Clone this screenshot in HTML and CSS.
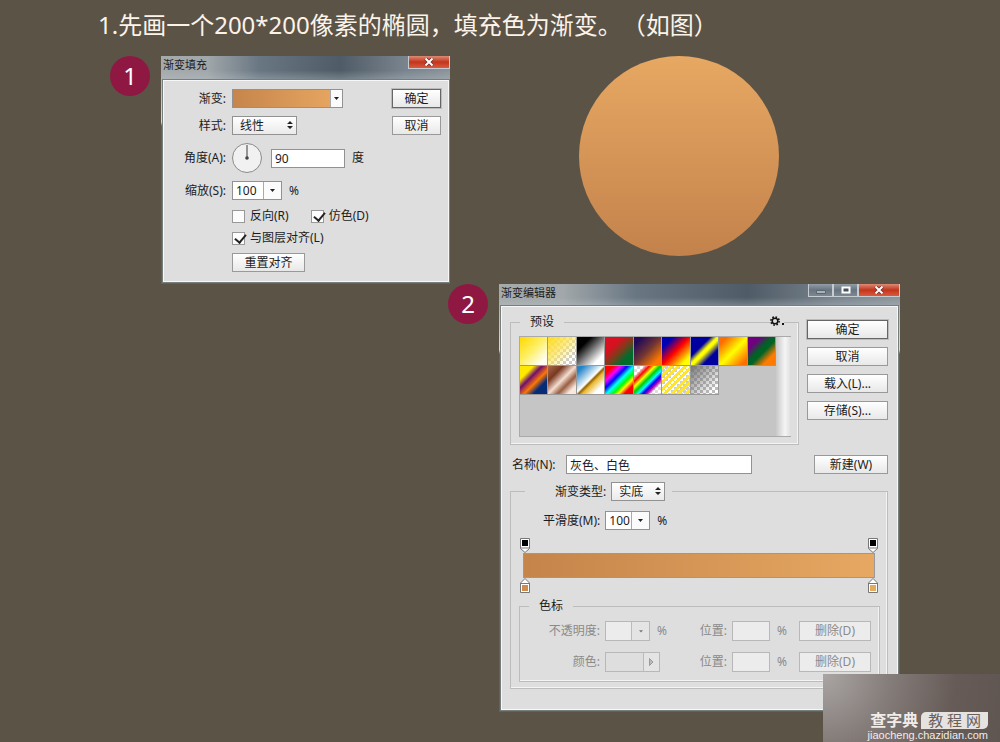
FILE: index.html
```html
<!DOCTYPE html>
<html lang="zh-CN">
<head>
<meta charset="utf-8">
<title>渐变填充教程</title>
<link rel="stylesheet" href="styles.css">
</head>
<body>
<h1 class="heading">1.先画一个200*200像素的椭圆，填充色为渐变。（如图）</h1>

<main>
  <section class="step step-one">
    <span class="badge">1</span>
    <form class="dialog fill-dialog">
      <header class="titlebar">
        <h2 class="title">渐变填充</h2>
        <div class="window-buttons">
          <button type="button" class="win-btn close" aria-label="关闭"><svg width="10" height="8" viewBox="0 0 10 8"><path d="M1.500 .5 8.500 7.500M8.500 .5 1.500 7.500" stroke="#7b3030" stroke-width="3.600"/><path d="M1.500 .5 8.500 7.500M8.500 .5 1.500 7.500" stroke="#fff" stroke-width="2"/></svg></button>
        </div>
      </header>
      <div class="dialog-body fill-body">
        <div class="fill-fields">
          <div class="field">
            <label for="grad">渐变:</label>
            <div class="combo grad-combo">
              <button type="button" id="grad" class="grad-preview" aria-label="渐变"></button>
              <button type="button" class="drop" aria-label="展开"><svg width="5" height="3" viewBox="0 0 5 3"><path d="M0 0H5L2.500 3Z"/></svg></button>
            </div>
          </div>
          <div class="field">
            <label for="style">样式:</label>
            <span class="select style-select"><select id="style"><option>线性</option></select><svg width="6" height="8" viewBox="0 0 6 8"><path d="M0 3H6L3 0ZM0 5H6L3 8Z"/></svg></span>
          </div>
          <div class="field">
            <label for="angle">角度(A):</label>
            <svg class="dial" width="32" height="30" viewBox="0 0 32 30"><circle cx="15" cy="15" r="14.500" fill="#f1f1f1" stroke="#8a8a8a"/><path d="M15 2V15" stroke="#777" stroke-width="1.500"/><circle cx="15" cy="15" r="1.800" fill="#444"/></svg>
            <input id="angle" class="text angle" type="text" value="90"><span class="unit">度</span>
          </div>
          <div class="field">
            <label for="scale">缩放(S):</label>
            <div class="combo scale-combo">
              <input id="scale" type="text" value="100">
              <button type="button" class="drop" aria-label="展开"><svg width="5" height="3" viewBox="0 0 5 3"><path d="M0 0H5L2.500 3Z"/></svg></button>
            </div><span class="unit">%</span>
          </div>
          <div class="checks">
            <div class="check-row">
              <label class="check"><input type="checkbox">反向(R)</label>
              <label class="check"><input type="checkbox" checked>仿色(D)</label>
            </div>
            <div class="check-row"><label class="check"><input type="checkbox" checked>与图层对齐(L)</label></div>
          </div>
          <button type="button" class="btn reset">重置对齐</button>
        </div>
        <div class="actions">
          <button type="button" class="btn default">确定</button>
          <button type="button" class="btn">取消</button>
        </div>
      </div>
    </form>
    <div class="ellipse"></div>
  </section>

  <section class="step step-two">
    <span class="badge">2</span>
    <form class="dialog editor-dialog">
      <header class="titlebar">
        <h2 class="title">渐变编辑器</h2>
        <div class="window-buttons">
          <button type="button" class="win-btn" aria-label="最小化"><svg width="12" height="8" viewBox="0 0 12 8"><path d="M1.500 4.500H10.500V7.500H1.500Z" fill="#a9b2ba" stroke="#5b6670"/></svg></button>
          <button type="button" class="win-btn" aria-label="最大化"><svg width="10" height="8" viewBox="0 0 10 8"><path d="M1.500 1.500H8.500V6.500H1.500Z" fill="#46515e" stroke="#fff" stroke-width="2"/></svg></button>
          <button type="button" class="win-btn close" aria-label="关闭"><svg width="10" height="8" viewBox="0 0 10 8"><path d="M1.500 .5 8.500 7.500M8.500 .5 1.500 7.500" stroke="#7b3030" stroke-width="3.600"/><path d="M1.500 .5 8.500 7.500M8.500 .5 1.500 7.500" stroke="#fff" stroke-width="2"/></svg></button>
        </div>
      </header>
      <div class="dialog-body editor-body">
        <div class="editor-top">
          <fieldset class="group presets">
            <legend>预设</legend>
            <button type="button" class="gear" aria-label="预设选项"><svg width="14" height="10" viewBox="0 0 14 10"><circle cx="5" cy="5" r="2.800" fill="none" stroke="#111" stroke-width="1.500"/><circle cx="5" cy="5" r="4.100" fill="none" stroke="#111" stroke-width="1.600" stroke-dasharray="1.610 1.610"/><path d="M12 7H14V9H12Z" fill="#111"/></svg></button>
            <div class="preset-list">
              <div class="swatches">
                <i class="swatch s1"></i><i class="swatch s2"></i><i class="swatch s3"></i><i class="swatch s4"></i><i class="swatch s5"></i><i class="swatch s6"></i><i class="swatch s7"></i><i class="swatch s8"></i><i class="swatch s9"></i>
                <i class="swatch s10"></i><i class="swatch s11"></i><i class="swatch s12"></i><i class="swatch s13"></i><i class="swatch s14"></i><i class="swatch s15"></i><i class="swatch s16"></i>
              </div>
              <div class="scrollbar"></div>
            </div>
          </fieldset>
          <div class="actions">
            <button type="button" class="btn default">确定</button>
            <button type="button" class="btn">取消</button>
            <button type="button" class="btn">载入(L)...</button>
            <button type="button" class="btn">存储(S)...</button>
          </div>
        </div>

        <div class="name-row">
          <label for="name">名称(N):</label>
          <input id="name" class="text name" type="text" value="灰色、白色">
          <button type="button" class="btn new">新建(W)</button>
        </div>

        <fieldset class="group type-group">
          <legend><label for="type">渐变类型:</label><span class="select"><select id="type"><option>实底</option></select><svg width="6" height="8" viewBox="0 0 6 8"><path d="M0 3H6L3 0ZM0 5H6L3 8Z"/></svg></span></legend>
          <div class="smooth-row">
            <label for="smooth">平滑度(M):</label>
            <div class="combo small-combo">
              <input id="smooth" type="text" value="100">
              <button type="button" class="drop" aria-label="展开"><svg width="5" height="3" viewBox="0 0 5 3"><path d="M0 0H5L2.500 3Z"/></svg></button>
            </div><span class="unit">%</span>
          </div>
          <div class="ramp">
            <div class="stops">
              <svg width="10" height="15" viewBox="0 0 10 15"><path d="M.5 .5H9.500V10.500L5 14.500 .5 10.500Z" fill="#fff" stroke="#777"/><path d="M.5 10H9.500" stroke="#777"/><path d="M2 2H8V8H2Z" fill="#000"/></svg>
              <svg width="10" height="15" viewBox="0 0 10 15"><path d="M.5 .5H9.500V10.500L5 14.500 .5 10.500Z" fill="#fff" stroke="#777"/><path d="M.5 10H9.500" stroke="#777"/><path d="M2 2H8V8H2Z" fill="#000"/></svg>
            </div>
            <div class="ramp-bar"></div>
            <div class="stops">
              <svg width="10" height="15" viewBox="0 0 10 15"><path d="M.5 14.500H9.500V5L5 .5 .5 5Z" fill="#fff" stroke="#777"/><path d="M.5 5.500H9.500" stroke="#777"/><path d="M2 7H8V13H2Z" fill="#cf8a4c"/></svg>
              <svg width="10" height="15" viewBox="0 0 10 15"><path d="M.5 14.500H9.500V5L5 .5 .5 5Z" fill="#fff" stroke="#777"/><path d="M.5 5.500H9.500" stroke="#777"/><path d="M2 7H8V13H2Z" fill="#e5aa5c"/></svg>
            </div>
          </div>
          <fieldset class="group stop-group" disabled>
            <legend>色标</legend>
            <div class="stop-row">
              <label for="opacity">不透明度:</label>
              <div class="stop-control"><div class="combo small-combo">
                <input id="opacity" type="text">
                <button type="button" class="drop" aria-label="展开"><svg width="4" height="3" viewBox="0 0 6 4"><path d="M0 0H6L3 3.500Z"/></svg></button>
              </div><span class="unit">%</span></div>
              <label for="pos1">位置:</label>
              <div class="stop-control"><input id="pos1" class="text pos" type="text"><span class="unit">%</span></div>
              <button type="button" class="btn">删除(D)</button>
            </div>
            <div class="stop-row">
              <label for="color">颜色:</label>
              <div class="stop-control"><div class="combo color-combo">
                <button type="button" id="color" class="color-well" aria-label="颜色"></button>
                <button type="button" class="drop" aria-label="展开"><svg width="5" height="8" viewBox="0 0 5 8"><path d="M.5 .5V7.500L4 4Z" fill="#bbb" stroke="#999"/></svg></button>
              </div></div>
              <label for="pos2">位置:</label>
              <div class="stop-control"><input id="pos2" class="text pos" type="text"><span class="unit">%</span></div>
              <button type="button" class="btn">删除(D)</button>
            </div>
          </fieldset>
        </fieldset>
      </div>
    </form>
  </section>
</main>

<aside class="watermark">
  <div class="brand"><span class="brand-name">查字典</span><span class="brand-tag">教 程 网</span></div>
  <div class="brand-url">jiaocheng.chazidian.com</div>
</aside>
</body>
</html>
```
FILE: styles.css
```css
* { box-sizing: border-box; }

body {
  margin: 0;
  min-height: 100vh;
  position: relative;
  overflow: hidden;
  background: #5c5347;
  color: #1c1c1c;
  font: 12px/16px "Noto Sans", "Noto Sans CJK SC", sans-serif;
}

button, input, select { font: inherit; color: inherit; margin: 0; padding: 0; border-radius: 0; }
svg { display: block; fill: #222; flex: none; }

.heading {
  margin: 0;
  padding: 8px 0 0 98px;
  height: 56px;
  color: #fbf3ea;
  font-size: 24px;
  font-weight: 400;
  line-height: 34px;
  white-space: nowrap;
  text-spacing-trim: space-all;
}

/* Steps */
.step { display: flex; align-items: flex-start; }
.step-one { padding-left: 110px; }
.step-two { padding-left: 448px; }
.badge {
  flex: none;
  width: 40px;
  height: 40px;
  border-radius: 50%;
  background: #8f1843;
  color: #fff;
  font-size: 24px;
  line-height: 40px;
  text-align: center;
}
.ellipse {
  flex: none;
  width: 200px;
  height: 200px;
  margin-left: 129px;
  border-radius: 50%;
  background: linear-gradient(#e7a863, #c3824b);
}

/* Windows */
.dialog {
  margin-left: 11px;
  padding: 0 2px 2px;
  background: linear-gradient(#98a0a4, #d5dadc 66px, #62625c 70px);
}
.fill-dialog { flex: 0 0 289px; padding-right: 1px; }
.editor-dialog { flex: 0 0 401px; }
.titlebar {
  display: flex;
  justify-content: space-between;
  align-items: flex-start;
  height: 22px;
  margin: 0 -2px;
  background:
    linear-gradient(transparent 60%, rgba(190, 200, 205, .35)),
    linear-gradient(90deg, #a5aaab, #a1a7aa 16%, #697783 34%, #4f5b66 62%, #78838d 84%, #8c949a);
}
.fill-dialog .titlebar { height: 24px; margin-right: -1px; }
.title {
  margin: 0;
  padding: 1px 2px;
  font-size: 11px;
  font-weight: 400;
  line-height: 16px;
}
.window-buttons { display: flex; }
.win-btn {
  display: grid;
  place-items: center;
  width: 25px;
  height: 13px;
  border: 1px solid #c5ccd2;
  border-top: 0;
  background: linear-gradient(#929da7, #68747f 50%, #7b8791);
}
.win-btn.close { width: 42px; background: linear-gradient(#dc8b75, #c3351c 50%, #d95a3d); }
.dialog-body {
  border: 1px solid #f7f7f7;
  outline: 1px solid #777e7e;
  background: #dedede;
}

/* Controls */
.btn {
  height: 19px;
  border: 1px solid #999;
  background: linear-gradient(#fff, #e8e8e8);
  line-height: 16px;
}
.btn.default { border-color: #666; box-shadow: 0 0 0 1px #bbb; }
.text, .combo, .select {
  height: 19px;
  border: 1px solid #929292;
  background: #fff;
}
.text { padding: 0 3px; }
.combo { display: flex; }
.combo input { flex: 1; min-width: 0; border: 0; padding-left: 3px; background: none; }
.drop {
  display: grid;
  place-items: center;
  width: 18px;
  border: 0;
  border-left: 1px solid #aaa;
  background: #fbfbfb;
}
.select {
  position: relative;
  display: block;
  width: 54px;
  background: linear-gradient(#fff, #eaeaea);
}
.select select {
  display: block;
  width: 100%;
  height: 17px;
  padding-left: 7px;
  border: 0;
  appearance: none;
  background: none;
}
.select svg { position: absolute; right: 3px; top: 4px; }
.actions { display: flex; flex-direction: column; gap: 8px; }

/* Gradient fill dialog */
.fill-body {
  display: flex;
  justify-content: space-between;
  padding: 8px 7px 9px 0;
}
.fill-fields { display: flex; flex-direction: column; gap: 8px; }
.fill-body .actions { width: 49px; }
.field { display: flex; align-items: center; }
.field > label { width: 62px; margin-right: 6px; text-align: right; }
.grad-combo { width: 111px; }
.grad-preview { flex: 1; border: 0; background: linear-gradient(90deg, #c6854b, #e5a560); }
.grad-combo .drop { width: 12px; }
.style-select { width: 65px; }
.dial { margin-right: 7px; }
.angle { width: 74px; }
.scale-combo { width: 50px; }
.unit { margin-left: 7px; }
.checks { display: flex; flex-direction: column; gap: 6px; margin-left: 68px; }
.check-row { display: flex; gap: 22px; }
.check { display: flex; align-items: center; gap: 5px; }
.check input {
  appearance: none;
  position: relative;
  width: 13px;
  height: 13px;
  border: 1px solid #999;
  background: #fcfcfc;
}
.check input:checked::before {
  content: "";
  position: absolute;
  left: 4px;
  top: -1px;
  width: 5px;
  height: 9px;
  border: solid #222;
  border-width: 0 2px 2px 0;
  transform: rotate(40deg);
}
.reset { width: 73px; margin: -1px 0 0 68px; }

/* Gradient editor dialog */
.editor-body { padding: 7px 9px 20px 8px; }
.editor-top { display: flex; justify-content: space-between; }
.editor-top .actions { width: 81px; padding-top: 6px; }
.group {
  position: relative;
  min-width: 0;
  margin: 0;
  padding: 0;
  border: 1px solid #bcbcbc;
  box-shadow: inset -1px -1px #f4f4f4;
}
.group legend { padding: 0 10px; }
.presets { flex: 0 0 289px; padding: 6px 7px 7px 8px; }
.presets legend { margin-left: 1px; }
.gear {
  position: absolute;
  right: 14px;
  top: -14px;
  border: 0;
  background: #dedede;
}
.preset-list {
  display: flex;
  height: 101px;
  border: 1px solid #aaa;
  border-right: 0;
  background: #c5c5c5;
}
.swatches {
  flex: 1;
  display: grid;
  grid-template-columns: repeat(9, 1fr);
  grid-auto-rows: 29px;
  align-content: start;
}
.scrollbar { width: 15px; background: linear-gradient(90deg, #c8c8c8, #f5f5f5 60%, #ddd); }
.swatch { border: solid #999; border-width: 0 1px 1px 0; }
.s1 { background: linear-gradient(135deg, #ffd800, #ffef60 45%, #fffef0 85%); }
.s2 { background: linear-gradient(135deg, #ffdc20, rgba(255, 230, 90, .8) 40%, transparent 80%), repeating-conic-gradient(#ccc 0 25%, #fff 0 50%) 0 0 / 6px 6px; }
.s3 { background: linear-gradient(135deg, #000 25%, #fff 80%); }
.s4 { background: linear-gradient(135deg, #d91020 30%, #73401b 55%, #006c2c 75%); }
.s5 { background: linear-gradient(135deg, #230a59 15%, #713533 50%, #ff7600 85%); }
.s6 { background: linear-gradient(135deg, #0000b4 20%, #f00 50%, #ff0 85%); }
.s7 { background: linear-gradient(135deg, #0000a0 35%, #ff0 48% 54%, #0000a0 72%); }
.s8 { background: linear-gradient(135deg, #ff6d00 15%, #ff0 52%, #ff6d00 90%); }
.s9 { background: linear-gradient(135deg, #700080 22%, #006224 45% 55%, #ff7a00 78%); }
.s10 { background: linear-gradient(135deg, #ffe800 24%, #701070 40%, #ff7600 58%, #062c78 75%); }
.s11 { background: linear-gradient(135deg, #a86a4c, #793820 27%, #f4ddd0 50%, #985e42 67%, #f8e8dd 85%); }
.s12 { background: linear-gradient(135deg, #2584c8 12%, #fff 48%, #936300 53%, #eab931 60%, #fff 82%); }
.s13 { background: linear-gradient(135deg, red 15%, #f0f 28%, #00f 40%, #0ff 52%, #0f0 64%, #ff0 73%, red 84%); }
.s14 { background: linear-gradient(135deg, transparent 18%, red 28%, #ff0 38%, #0c0 48%, #0ff 58%, #00f 66%, #b000b0 73%, transparent 82%), repeating-conic-gradient(#ddd 0 25%, #fff 0 50%) 0 0 / 6px 6px; }
.s15 { background: repeating-linear-gradient(135deg, #ffe52e 0 3px, transparent 3px 5px), repeating-conic-gradient(#ccc 0 25%, #fff 0 50%) 0 0 / 6px 6px; }
.s16 { background: linear-gradient(135deg, #777, transparent 85%), repeating-conic-gradient(#bbb 0 25%, #fff 0 50%) 0 0 / 6px 6px; }

.name-row { display: flex; align-items: center; margin: 10px 0 8px 2px; }
.name-row label { width: 54px; }
.name { width: 186px; }
.new { width: 74px; margin-left: auto; }

.type-group { padding: 10px 7px 6px 8px; }
.type-group > legend {
  display: flex;
  align-items: center;
  gap: 5px;
  margin-left: 6px;
  padding: 0 7px 0 30px;
}
.smooth-row { display: flex; align-items: center; margin-left: 24px; }
.smooth-row label { margin-right: 5px; }
.small-combo { width: 45px; }
.ramp { margin: 8px 5px 5px 4px; }
.stops { display: flex; justify-content: space-between; margin: 0 -3px; }
.ramp-bar {
  height: 25px;
  border: 1px solid #999;
  background: linear-gradient(90deg, #c5844a, #e6a862);
}
.stop-group {
  display: grid;
  gap: 11px;
  padding: 7px 8px 9px;
  color: #8a8a8a;
}
.stop-group > legend { margin-left: 1px; color: #1c1c1c; }
.stop-row {
  display: grid;
  grid-template-columns: 72px 83px 44px 72px 1fr;
  align-items: center;
}
.stop-row label { text-align: right; }
.stop-control { display: flex; align-items: center; padding-left: 5px; }
.stop-group .combo, .stop-group .text, .stop-group .btn { height: 20px; border-color: #b8b8b8; background: #ececec; }
.stop-group .drop { background: #e4e4e4; border-color: #bbb; }
.stop-group svg { fill: #777; }
.color-combo { width: 55px; }
.color-well { flex: 1; border: 0; background: #dedede; }
.color-combo .drop { width: 16px; }
.pos { width: 38px; }

/* Site mark */
.watermark {
  position: absolute;
  right: 0;
  bottom: 0;
  width: 177px;
  height: 68px;
  padding: 37px 12px 0 0;
  background: radial-gradient(circle at 0 0, #aaa5a4, #857d7a 35%, #665b57 70%, #5f5551);
  color: #f0ecea;
  text-align: right;
}
.brand { display: flex; justify-content: flex-end; align-items: center; gap: 3px; }
.brand-name { font-size: 16px; font-weight: 700; line-height: 18px; }
.brand-tag {
  padding: 0 7px;
  border-radius: 5px 0 5px 0;
  background: #e6e2e0;
  color: #6a605c;
  font-size: 15px;
  line-height: 17px;
}
.brand-url { font: 11px/12px "Liberation Sans", Arial, sans-serif; }
```
